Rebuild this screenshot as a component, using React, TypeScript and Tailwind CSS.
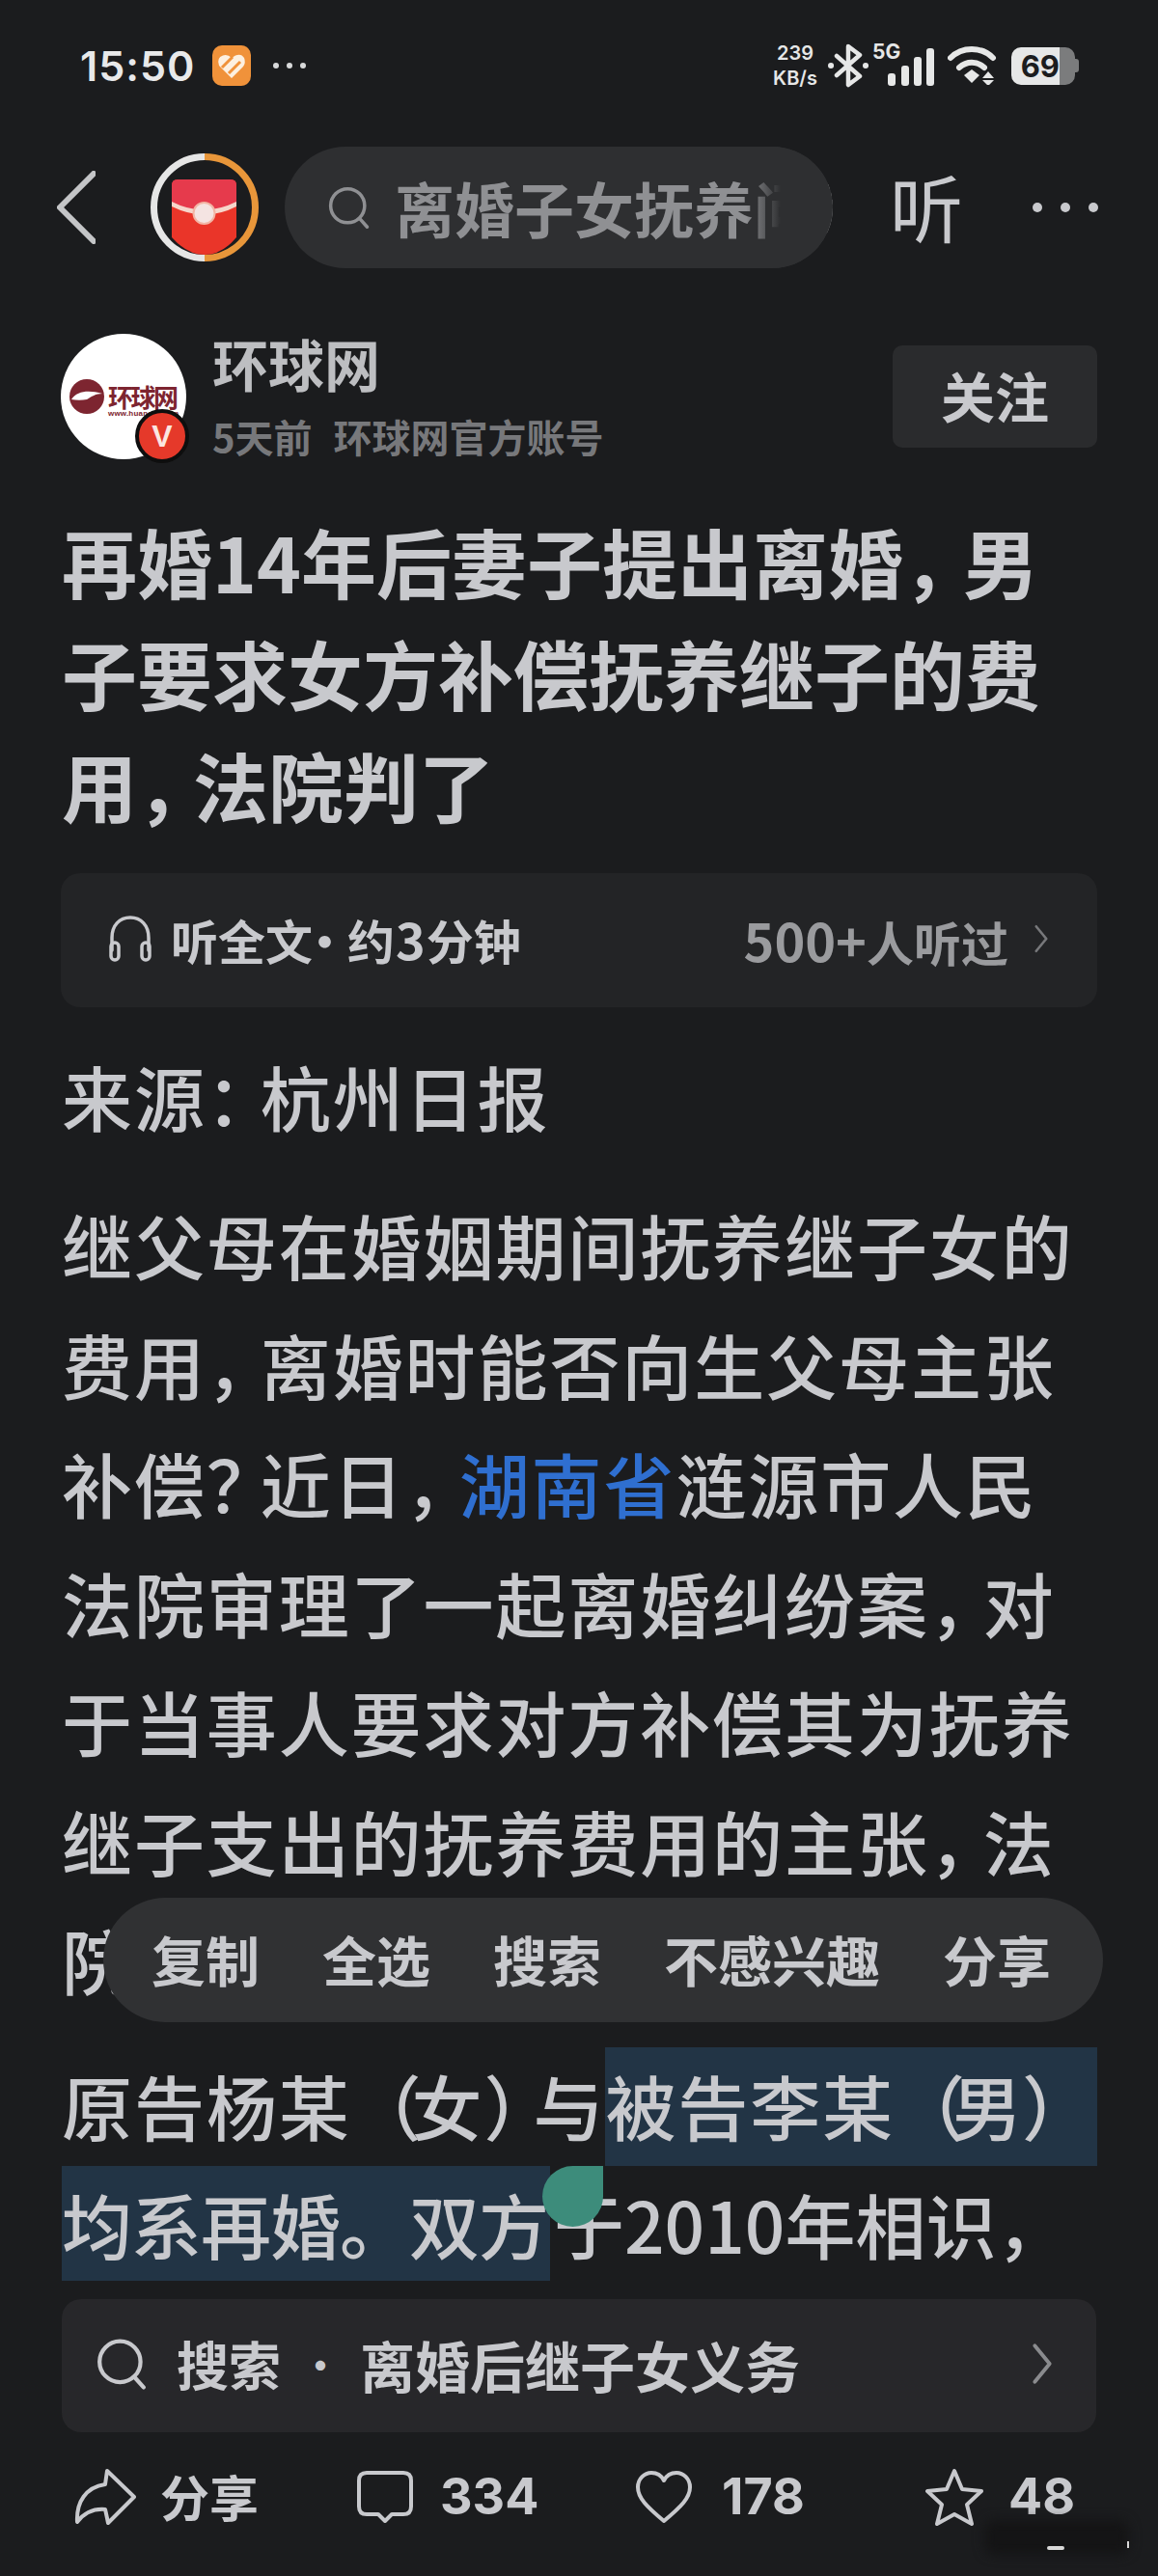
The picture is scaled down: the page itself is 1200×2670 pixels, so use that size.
import { type ReactNode } from 'react'

const cjk = { fontFamily: '"Noto Sans CJK SC", "Noto Sans", sans-serif' }

// 原图的标点是压缩过的，收掉后面的空白
function P({ c, t = 'tracking-[-17px]' }: { c: string; t?: string }) {
  return <span className={t}>{c}</span>
}

const bodyLines: ReactNode[] = [
  '继父母在婚姻期间抚养继子女的',
  <>
    费用<P c="，" />离婚时能否向生父母主张
  </>,
  <>
    补偿<P c="？" />近日<P c="，" />
    <span className="text-[#2f6fd0]">湖南省</span>涟源市人民
  </>,
  <>
    法院审理了一起离婚纠纷案<P c="，" />对
  </>,
  '于当事人要求对方补偿其为抚养',
  <>
    继子支出的抚养费用的主张<P c="，" />法
  </>,
  '院',
]

function SearchIcon({ className }: { className: string }) {
  return (
    <svg viewBox="0 0 50 50" fill="none" stroke="currentColor" strokeWidth="4" strokeLinecap="round" className={className}>
      <circle cx="23" cy="23" r="20" />
      <path d="M37 38l9 10" />
    </svg>
  )
}

function Chevron({ className }: { className: string }) {
  return (
    <svg viewBox="0 0 20 40" fill="none" stroke="currentColor" strokeWidth="3.5" strokeLinecap="round" strokeLinejoin="round" className={className}>
      <path d="M3 3l14 17L3 37" />
    </svg>
  )
}

function StatusBar() {
  return (
    <div className="flex h-[136px] items-center justify-between pl-[83px] pr-[80px]">
      <div className="flex items-center">
        <span className="w-[137px] font-['Inter'] text-[43px] font-semibold leading-none tracking-[1px] text-[#e8e9ea]">15:50</span>
        <svg viewBox="0 0 40 42" className="h-[42px] w-[40px]">
          <rect width="40" height="42" rx="10" fill="#f0923a" />
          <path d="M20 34L7 21Q4 13 11 10.500Q16 9 20 13L24 10.500Q30 8 33 13Q35 18 32 22z" fill="#fdf0e0" />
          <path d="M10 23L21 12M17 29L29 17" stroke="#f0923a" strokeWidth="3" fill="none" />
        </svg>
        <svg viewBox="0 0 36 6" className="ml-[22px] h-[6px] w-[36px] fill-[#d8d9da]">
          <circle cx="4" cy="3" r="3" />
          <circle cx="18" cy="3" r="3" />
          <circle cx="32" cy="3" r="3" />
        </svg>
      </div>
      <div className="flex items-center text-[#e6e7e7]">
        <div className="flex w-[50px] flex-col items-center font-['Inter'] text-[20px] font-semibold leading-[26px]">
          <span>239</span>
          <span>KB/s</span>
        </div>
        <svg viewBox="0 0 42 46" fill="none" stroke="currentColor" strokeWidth="4.5" strokeLinejoin="round" strokeLinecap="round" className="ml-[9px] h-[46px] w-[42px]">
          <path d="M9 13l24 21-12 9V3l12 9L9 33" />
          <path d="M3 23h.1M39 23h.1" strokeWidth="6" />
        </svg>
        <div className="relative ml-[4px] h-[44px] w-[64px]">
          <span className="absolute left-0 top-[-4px] font-['Inter'] text-[21px] font-bold leading-[24px]">5G</span>
          <svg viewBox="0 0 48 40" className="absolute left-[16px] top-[4px] h-[40px] w-[48px] fill-current">
            <rect x="0" y="26" width="8" height="13" rx="3" />
            <rect x="14" y="18" width="8" height="21" rx="3" />
            <rect x="27" y="9" width="8" height="30" rx="3" />
            <rect x="40" y="0" width="8" height="39" rx="3" />
          </svg>
        </div>
        <svg viewBox="0 0 54 40" fill="none" stroke="currentColor" strokeLinecap="round" className="ml-[14px] h-[40px] w-[54px]">
          <path d="M3 12C15 0 35 0 47 12" strokeWidth="6" />
          <path d="M12 22c8-7 18-7 26 0" strokeWidth="6" />
          <path d="M17 30l8-6 8 6-8 8z" fill="currentColor" stroke="none" />
          <path d="M42 26l6 7H36zM36 35h12l-6 6z" fill="currentColor" stroke="none" />
        </svg>
        <div className="ml-[12px] flex h-[39px] w-[72px] items-center">
          <div className="flex h-[39px] w-[50px] items-center justify-end rounded-l-[10px] bg-[#e6e7e7] font-['Inter'] text-[31px] font-bold leading-none text-[#1b1c1e]">
            69
          </div>
          <div className="h-[39px] w-[16px] rounded-r-[10px] bg-[#7b7c7d]" />
          <div className="h-[14px] w-[4px] rounded-r-[3px] bg-[#7b7c7d]" />
        </div>
      </div>
    </div>
  )
}

function NavBar() {
  return (
    <div className="mt-[16px] flex h-[126px] items-center pl-[59px]">
      <svg viewBox="0 0 40 76" fill="none" stroke="#c4c5c7" strokeWidth="6" strokeLinecap="round" strokeLinejoin="round" className="h-[76px] w-[40px]">
        <path d="M38 3L3 38l35 35" />
      </svg>
      <svg viewBox="0 0 112 112" className="ml-[57px] h-[112px] w-[112px]">
        <path d="M56 3.5a52.500 52.500 0 0 0 0 105" fill="none" stroke="#e6e6e6" strokeWidth="7" />
        <path d="M56 3.500a52.500 52.500 0 0 1 0 105" fill="none" stroke="#e8963a" strokeWidth="7" />
        <path d="M22 33q0-6 6-6h55q6 0 6 6v54q-15 18-33 18T22 87z" fill="#ea3529" />
        <path d="M22 33q0-6 6-6h55q6 0 6 6v20q-33 18-67 0z" fill="#e63a4c" />
        <path d="M22 50q33 17 67 0v5q-33 17-67 0z" fill="#f6d6cb" />
        <circle cx="55.500" cy="62" r="11" fill="#f4e4e2" stroke="#f2b5a5" strokeWidth="2" />
      </svg>
      <div className="relative ml-[27px] flex h-[126px] w-[568px] items-center overflow-hidden rounded-full bg-[#2e2f31] pl-[45px] text-[#8f9093]">
        <SearchIcon className="h-[48px] w-[44px] shrink-0" />
        <span className="ml-[25px] whitespace-nowrap text-[62px] font-bold leading-none" style={cjk}>
          离婚子女抚养问题
        </span>
        <div className="absolute bottom-0 right-0 top-0 w-[90px] bg-[linear-gradient(90deg,rgba(46,47,49,0)_0%,#2e2f31_40%)]" />
      </div>
      <span className="ml-[59px] pb-[4px] text-[76px] leading-none text-[#c8c9cd]" style={cjk}>
        听
      </span>
      <svg viewBox="0 0 68 10" className="ml-[72px] h-[10px] w-[68px] fill-[#c8c9cd]">
        <circle cx="5" cy="5" r="5" />
        <circle cx="34" cy="5" r="5" />
        <circle cx="63" cy="5" r="5" />
      </svg>
    </div>
  )
}

function AuthorRow() {
  return (
    <div className="mt-[68px] flex h-[130px] items-center pl-[63px] pr-[63px]" style={cjk}>
      <div className="relative flex h-[130px] w-[130px] shrink-0 items-center justify-center rounded-full bg-white">
        <svg viewBox="0 0 130 130" className="h-[130px] w-[130px]">
          <circle cx="27" cy="65" r="18" fill="#7d2530" />
          <path d="M11 68c6-9 18-10 32-6-7 0-11 3-16 6-5 1-11 1-16 0z" fill="#fff" />
          <text x="49" y="76" fontSize="26" fontWeight="700" fill="#7d2530" style={cjk} textLength="73">
            环球网
          </text>
          <text x="49" y="85" fontSize="8" fontWeight="700" fill="#7d2530" fontFamily="Liberation Sans" textLength="73">
            www.huanqiu.com
          </text>
        </svg>
        <div className="absolute left-[77px] top-[78px] flex h-[56px] w-[56px] items-center justify-center rounded-full border-[4px] border-[#0e0e0e] bg-[#e5392a] font-['Liberation_Sans'] text-[32px] font-bold text-[#fbe6e1]">
          V
        </div>
      </div>
      <div className="ml-[27px] flex flex-1 flex-col">
        <span className="mt-[-3px] text-[58px] font-bold leading-[68px] text-[#bdbec1]">环球网</span>
        <span className="mt-[17px] whitespace-nowrap text-[40px] font-bold leading-[50px] text-[#77787b]">
          5天前<span className="ml-[22px]">环球网官方账号</span>
        </span>
      </div>
      <div className="flex h-[106px] w-[212px] items-center justify-center rounded-[10px] bg-[#2a2b2d] pb-[4px] text-[56px] font-bold text-[#c8c9cd]">
        关注
      </div>
    </div>
  )
}

function ListenCard() {
  return (
    <div className="mx-[63px] mt-[34px] flex h-[139px] items-center justify-between rounded-[20px] bg-[#232426] pb-[3px] pl-[49px] pr-[50px] text-[49px] font-bold" style={cjk}>
      <div className="flex items-center text-[#c8c9cd]">
        <svg viewBox="0 0 46 48" fill="none" stroke="currentColor" strokeWidth="3.500" strokeLinecap="round" className="h-[48px] w-[46px]">
          <path d="M4 36V23C4 10 12 2 23 2s19 8 19 21v13" />
          <rect x="3" y="28" width="8" height="18" rx="4" />
          <rect x="35" y="28" width="8" height="18" rx="4" />
        </svg>
        <span className="ml-[19px] whitespace-nowrap">
          听全文<span className="ml-[-12px] tracking-[-22px]">·</span>
          <span className="ml-[21px]">约</span>
          <span className="ml-[1px] text-[52px]">3</span>
          <span className="ml-[1px]">分钟</span>
        </span>
      </div>
      <div className="flex items-center text-[#9a9b9e]">
        <span className="whitespace-nowrap">
          <span className="text-[54px]">500+</span>人听过
        </span>
        <Chevron className="ml-[26px] h-[30px] w-[16px] text-[#77787b]" />
      </div>
    </div>
  )
}

function ArticleBody() {
  return (
    <div className="relative mt-[35px] pl-[64px] text-[73px] font-medium tracking-[1.900px] text-[#c8c9cd]" style={cjk}>
      <div className="h-[123px] leading-[112px]">
        来源<P c="：" />杭州日报
      </div>
      <div className="mt-[30px] leading-[114px]">
        {bodyLines.map((line, i) => (
          <div key={i} className="h-[123.500px] whitespace-nowrap">
            {line}
          </div>
        ))}
      </div>

      {/* 选中文字的工具条，盖在正文上 */}
      <div className="absolute left-[107px] top-[888px] flex h-[129px] w-[1036px] items-center rounded-full bg-[#303133] pb-[3px] pl-[50px] text-[56px] font-bold leading-none tracking-normal">
        <span>复制</span>
        <span className="ml-[65px]">全选</span>
        <span className="ml-[65px]">搜索</span>
        <span className="ml-[65px]">不感兴趣</span>
        <span className="ml-[65px]">分享</span>
      </div>

      <div className="mt-[25px] flex h-[123px] pr-[63px] leading-[118px]">
        <span className="whitespace-nowrap">
          原告杨某<P c="（" t="tracking-[-10px]" />女<P c="）" t="tracking-[-22px]" />与
        </span>
        <span className="flex-1 whitespace-nowrap bg-[#223445]">
          被告李某<P c="（" t="tracking-[-14px]" />
          <span className="tracking-[0px]">男）</span>
        </span>
      </div>
      <div className="relative flex h-[119px] whitespace-nowrap leading-[118px]">
        <span className="w-[506px] bg-[#223445] tracking-[-1px]">均系再婚。双方</span>
        <span className="ml-[4px] tracking-[0px]">于2010年相识，</span>
        <div className="absolute left-[498px] top-0 h-[63px] w-[63px] rounded-full rounded-tr-none bg-[#3d8c7b]" />
      </div>
    </div>
  )
}

function SearchCard() {
  return (
    <div className="mx-[64px] mt-[19px] flex h-[138px] items-center rounded-[20px] bg-[#27272a] pb-[3px] pl-[36px] pr-[44px] text-[#c8c9cd]" style={cjk}>
      <SearchIcon className="h-[54px] w-[53px] shrink-0" />
      <span className="ml-[30px] whitespace-nowrap text-[54px] font-bold leading-none">搜索</span>
      <span className="ml-[21px] text-[40px] font-bold leading-none">·</span>
      <span className="ml-[21px] flex-1 whitespace-nowrap text-[57px] font-bold leading-none">离婚后继子女义务</span>
      <Chevron className="h-[44px] w-[24px] text-[#8a8b8e]" />
    </div>
  )
}

function ActionBar() {
  return (
    <div className="mt-[36px] flex h-[62px] items-center text-[#c8c9cd]" style={cjk}>
      <svg viewBox="0 0 64 60" fill="none" stroke="currentColor" strokeWidth="4" strokeLinejoin="round" className="ml-[77px] h-[60px] w-[64px]">
        <path d="M34 3L62 30L35 57Q33 47 32 43C20 42 10 47 3 56C2 35 12 20 32 17z" />
      </svg>
      <span className="ml-[25px] w-[102px] text-[51px] font-bold leading-none">分享</span>
      <svg viewBox="0 0 58 54" fill="none" stroke="currentColor" strokeWidth="4" strokeLinejoin="round" className="ml-[102px] h-[54px] w-[58px]">
        <path d="M10 2h38q8 0 8 8v27q0 8-8 8H36l-7 7-7-7H10q-8 0-8-8V10q0-8 8-8z" />
      </svg>
      <span className="ml-[28px] w-[97px] font-['Inter'] text-[52px] font-bold leading-none">334</span>
      <svg viewBox="0 0 58 54" fill="none" stroke="currentColor" strokeWidth="4" strokeLinejoin="round" className="ml-[106px] h-[54px] w-[58px]">
        <path d="M29 52C11 37 2 28 2 17 2 8 9 2 16 2c5 0 10 2 13 8 3-6 8-8 13-8 7 0 14 6 14 15 0 11-9 20-27 35z" />
      </svg>
      <span className="ml-[31px] w-[86px] font-['Inter'] text-[52px] font-bold leading-none">178</span>
      <svg viewBox="0 0 62 60" fill="none" stroke="currentColor" strokeWidth="4" strokeLinejoin="round" className="ml-[124px] h-[60px] w-[62px]">
        <path d="M31 3l8 19 20 2-15 14 5 20-18-10-18 10 5-20L3 24l20-2z" />
      </svg>
      <span className="ml-[25px] font-['Inter'] text-[52px] font-bold leading-none">48</span>
    </div>
  )
}

export default function App() {
  return (
    <div className="relative h-[2670px] w-[1200px] overflow-hidden bg-[#1b1c1e]">
      <StatusBar />
      <NavBar />
      <AuthorRow />
      <div className="mt-[47px] pl-[64px] text-[78px] font-bold leading-[116px] text-[#c8c9cd]" style={cjk}>
        <div className="whitespace-nowrap">
          再婚14年后妻子提出离婚<P c="，" t="tracking-[-16px]" />男
        </div>
        <div className="whitespace-nowrap">子要求女方补偿抚养继子的费</div>
        <div className="whitespace-nowrap">
          用<P c="，" t="tracking-[-20px]" />法院判了
        </div>
      </div>
      <ListenCard />
      <ArticleBody />
      <SearchCard />
      <ActionBar />
      {/* 右下角水印 */}
      <div className="absolute left-[1020px] top-[2612px] h-[36px] w-[150px] rounded-[10px] bg-[#141415] blur-[6px]" />
      <div className="absolute left-[1085px] top-[2639px] h-[4px] w-[18px] rounded-full bg-[#d8d8d8]" />
      <div className="absolute left-[1168px] top-[2634px] h-[7px] w-[2px] bg-[#d8d8d8]" />
    </div>
  )
}
